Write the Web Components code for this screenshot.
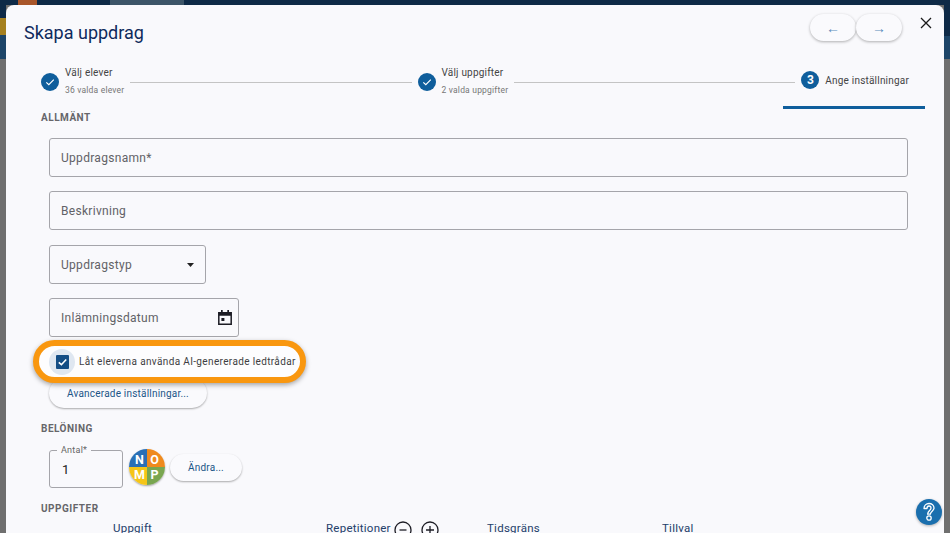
<!DOCTYPE html>
<html lang="sv">
<head>
<meta charset="utf-8">
<title>Skapa uppdrag</title>
<style>
    html, body { margin: 0; height: 533px; overflow: hidden; }
    body { font-family: Roboto, "Liberation Sans", sans-serif; }
</style>
</head>
<body>
<task-page>
    <task-dialog heading="Skapa uppdrag">
        <task-stepper>
            <task-step done label="Välj elever" sub="36 valda elever"></task-step>
            <task-step done label="Välj uppgifter" sub="2 valda uppgifter"></task-step>
            <task-step number="3" label="Ange inställningar" current></task-step>
        </task-stepper>
        <section-label style="margin-top:3px">ALLMÄNT</section-label>
        <div style="display:flex;flex-direction:column;gap:14.33px;padding:13px 0 0 43px;width:859px">
            <text-field label="Uppdragsnamn*"></text-field>
            <text-field label="Beskrivning"></text-field>
            <text-field label="Uppdragstyp" kind="select" style="width:157px"></text-field>
            <text-field label="Inlämningsdatum" kind="date" style="width:190px"></text-field>
        </div>
        <ai-option>Låt eleverna använda AI-genererade ledtrådar</ai-option>
        <pill-button style="margin:-5.5px 0 0 43px;width:158px;height:30px;padding-top:2px">Avancerade inställningar...</pill-button>
        <section-label style="margin-top:14px">BELÖNING</section-label>
        <div style="display:flex;align-items:center;padding:14px 0 0 43px">
            <amount-field label="Antal*" value="1"></amount-field>
            <nomp-logo style="margin-left:6px"></nomp-logo>
            <pill-button style="margin:-2px 0 0 5px;width:72px;height:27px">Ändra...</pill-button>
        </div>
        <section-label style="margin-top:14px">UPPGIFTER</section-label>
        <task-columns></task-columns>
    </task-dialog>
    <help-button></help-button>
</task-page>

<script>
class TaskPage extends HTMLElement {
    constructor() {
        super();
        this.attachShadow({ mode: "open" }).innerHTML = `
            <style>
                :host {
                    display: block;
                    position: relative;
                    width: 950px;
                    height: 533px;
                    overflow: hidden;
                    background-color: #6f6f6f;
                }

                .behind {
                    position: absolute;
                    inset: 0;
                }

                .behind div {
                    position: absolute;
                }

                .front {
                    position: relative;
                    padding: 5px 6px 0 6px;
                }
            </style>

            <div class="behind">
                <div style="left:0;top:0;width:950px;height:5px;background:#0e2a47"></div>
                <div style="left:18px;top:0;width:19px;height:5px;background:#a8562a"></div>
                <div style="left:110px;top:0;width:74px;height:5px;background:#3d5568"></div>
                <div style="left:0;top:5px;width:6px;height:13px;background:#0e2a47"></div>
                <div style="left:0;top:18px;width:6px;height:17px;background:#a5801f"></div>
                <div style="left:0;top:35px;width:6px;height:24px;background:#1d4568"></div>
                <div style="left:944px;top:5px;width:6px;height:31px;background:#0e2a47"></div>
                <div style="left:944px;top:36px;width:6px;height:23px;background:#1d4568"></div>
            </div>
            <div class="front"><slot></slot></div>
        `;
    }
}

class TaskDialog extends HTMLElement {
    constructor() {
        super();
        this.attachShadow({ mode: "open" }).innerHTML = `
            <style>
                :host {
                    display: block;
                    width: 938px;
                    height: 528px;
                    box-sizing: border-box;
                    overflow: hidden;
                    background-color: #f9f9fc;
                    border-radius: 8px 8px 0 0;
                }

                header {
                    display: flex;
                    align-items: flex-start;
                    height: 55px;
                    padding-left: 18px;
                }

                h1 {
                    flex: 1;
                    margin: 15px 0 0;
                    font-size: 18px;
                    font-weight: 400;
                    line-height: 26px;
                    color: #0f2a5c;
                }

                .nav {
                    display: flex;
                    margin-top: 9px;
                }

                .nav button {
                    width: 46px;
                    height: 27px;
                    padding: 0;
                    border: 0;
                    border-radius: 14px;
                    background: #fafafd;
                    box-shadow: 0 1px 3px rgba(0, 0, 0, 0.3);
                    color: #5c8cbc;
                    font: 14px Roboto, sans-serif;
                }

                .close {
                    width: 12px;
                    height: 12px;
                    margin: 12px 12px 0 18px;
                }
            </style>

            <header>
                <h1></h1>
                <div class="nav">
                    <button>←</button>
                    <button>→</button>
                </div>
                <svg class="close" viewBox="0 0 12 12">
                    <path d="M1 1l10 10M11 1L1 11" stroke="#1a1a1a" stroke-width="1.3" fill="none"/>
                </svg>
            </header>
            <slot></slot>
        `;
        this.shadowRoot.querySelector("h1").textContent = this.getAttribute("heading");
    }
}

class TaskStepper extends HTMLElement {
    constructor() {
        super();
        this.attachShadow({ mode: "open" }).innerHTML = `
            <style>
                :host {
                    display: flex;
                    height: 48px;
                    padding: 0 35px 0 35px;
                }
            </style>
            <slot></slot>
        `;
    }
}

class TaskStep extends HTMLElement {
    constructor() {
        super();
        const done = this.hasAttribute("done");
        const current = this.hasAttribute("current");
        const sub = this.getAttribute("sub");
        this.attachShadow({ mode: "open" }).innerHTML = `
            <style>
                :host {
                    display: flex;
                    align-items: center;
                    height: 48px;
                    flex: none;
                }

                :host([done]) {
                    flex: 1 1 auto;
                }

                .circle {
                    flex: none;
                    display: flex;
                    align-items: center;
                    justify-content: center;
                    width: 18px;
                    height: 18px;
                    border-radius: 50%;
                    background-color: #0f5e9c;
                    color: white;
                    font-size: 12px;
                    font-weight: 700;
                    margin-top: -4px;
                }

                :host([current]) .circle {
                    margin-top: -8px;
                }

                .text {
                    flex: none;
                    margin: -6px 0 0 6px;
                }

                :host([current]) .text {
                    margin-top: -8px;
                }

                .label {
                    font-size: 10px;
                    line-height: 13px;
                    color: #444;
                    letter-spacing: 0.2px;
                }

                .sub {
                    font-size: 8.5px;
                    line-height: 11px;
                    margin-top: 6px;
                    color: #777;
                    letter-spacing: 0.2px;
                }

                .line {
                    flex: 1;
                    height: 1px;
                    background-color: #c4c4c4;
                    margin: -4px 6px 0 6px;
                }

                .bar {
                    position: absolute;
                    left: 783px;
                    top: 105.5px;
                    width: 142px;
                    height: 3px;
                    background-color: #0f5e9c;
                }
            </style>

            <span class="circle">${done
                ? `<svg width="10" height="10" viewBox="0 0 10 10"><path d="M1.3 5.4l2.5 2.3 5-5" stroke="white" stroke-width="1.2" fill="none"/></svg>`
                : this.getAttribute("number")}</span>
            <div class="text">
                <div class="label">${this.getAttribute("label")}</div>
                ${sub ? `<div class="sub">${sub}</div>` : ""}
            </div>
            ${done ? `<div class="line"></div>` : ""}
            ${current ? `<div class="bar"></div>` : ""}
        `;
    }
}

class SectionLabel extends HTMLElement {
    constructor() {
        super();
        this.attachShadow({ mode: "open" }).innerHTML = `
            <style>
                :host {
                    display: block;
                    padding-left: 35px;
                    font-size: 10px;
                    line-height: 14px;
                    font-weight: 700;
                    letter-spacing: 0.5px;
                    color: #66666a;
                }
            </style>
            <slot></slot>
        `;
    }
}

class TextField extends HTMLElement {
    constructor() {
        super();
        const kind = this.getAttribute("kind");
        let tail = "";
        if (kind === "select") {
            tail = `<svg width="7" height="4" viewBox="0 0 7 4"><path d="M0 0h7L3.5 4z" fill="#222"/></svg>`;
        } else if (kind === "date") {
            tail = `<svg width="14" height="15" viewBox="0 0 14 15">
                <path d="M.8 2.8h12.4v11.4H.8z" fill="none" stroke="#1c1c24" stroke-width="1.5"/>
                <path d="M.8 2.8h12.4v3H.8zM3 0h1.7v3H3zM9.3 0H11v3H9.3zM3.4 8h3v3h-3z" fill="#1c1c24"/>
            </svg>`;
        }
        this.attachShadow({ mode: "open" }).innerHTML = `
            <style>
                :host {
                    display: block;
                    height: 39px;
                }

                .box {
                    display: flex;
                    align-items: center;
                    justify-content: space-between;
                    box-sizing: border-box;
                    height: 100%;
                    padding: 1px ${kind === "select" ? 11 : 6}px 0 11px;
                    border: 1px solid #a5a5aa;
                    border-radius: 3px;
                    font-size: 12px;
                    letter-spacing: 0.3px;
                    color: #626267;
                }
            </style>
            <div class="box"><span>${this.getAttribute("label")}</span>${tail}</div>
        `;
    }
}

class AiOption extends HTMLElement {
    constructor() {
        super();
        this.attachShadow({ mode: "open" }).innerHTML = `
            <style>
                :host {
                    position: relative;
                    z-index: 1;
                    display: flex;
                    align-items: center;
                    box-sizing: border-box;
                    width: 273px;
                    height: 43px;
                    margin: 3.5px 0 0 27px;
                    padding-left: 10px;
                    background-color: #fdfdfe;
                    border: 6px solid #f9970f;
                    border-radius: 22px;
                    box-shadow: 0 2px 5px rgba(0, 0, 0, 0.35);
                    font-size: 10px;
                    letter-spacing: 0.36px;
                    color: #3d3d42;
                    white-space: nowrap;
                }

                .halo {
                    flex: none;
                    display: flex;
                    align-items: center;
                    justify-content: center;
                    width: 26px;
                    height: 26px;
                    margin-right: 4px;
                    border-radius: 50%;
                    background-color: #dfe7f1;
                }
            </style>

            <span class="halo">
                <svg width="13" height="14" viewBox="0 0 13 14">
                    <rect width="13" height="14" rx="1" fill="#134d85"/>
                    <path d="M2.8 7.3l2.6 2.4 4.8-5.2" stroke="white" stroke-width="1.6" fill="none"/>
                </svg>
            </span>
            <slot></slot>
        `;
    }
}

class PillButton extends HTMLElement {
    constructor() {
        super();
        this.attachShadow({ mode: "open" }).innerHTML = `
            <style>
                :host {
                    display: flex;
                    align-items: center;
                    justify-content: center;
                    box-sizing: border-box;
                    flex: none;
                    border-radius: 15px;
                    background-color: #fafafd;
                    box-shadow: 0 1px 2px rgba(0, 0, 0, 0.32);
                    font-size: 10px;
                    letter-spacing: 0.2px;
                    color: #1b5587;
                    white-space: nowrap;
                }
            </style>
            <slot></slot>
        `;
    }
}

class AmountField extends HTMLElement {
    constructor() {
        super();
        this.attachShadow({ mode: "open" }).innerHTML = `
            <style>
                :host {
                    display: block;
                    position: relative;
                    flex: none;
                    box-sizing: border-box;
                    width: 74px;
                    height: 38px;
                    padding: 10px 0 0 12px;
                    border: 1px solid #a5a5aa;
                    border-radius: 3px;
                    font-size: 13px;
                    line-height: 17px;
                    color: #222;
                }

                .legend {
                    position: absolute;
                    left: 7px;
                    top: -6px;
                    padding: 0 4px;
                    background-color: #f9f9fc;
                    font-size: 9px;
                    line-height: 11px;
                    letter-spacing: 0.25px;
                    color: #666;
                }
            </style>
            <span class="legend">${this.getAttribute("label")}</span>
            ${this.getAttribute("value")}
        `;
    }
}

class NompLogo extends HTMLElement {
    constructor() {
        super();
        this.attachShadow({ mode: "open" }).innerHTML = `
            <style>
                :host {
                    display: grid;
                    grid-template-columns: 1fr 1fr;
                    flex: none;
                    width: 36px;
                    height: 36px;
                    margin-top: -3px;
                    border-radius: 50%;
                    overflow: hidden;
                    box-shadow: 0 1px 2px rgba(0, 0, 0, 0.35);
                    font-size: 12.5px;
                    font-weight: 700;
                    color: white;
                }

                span {
                    display: flex;
                    align-items: center;
                    justify-content: center;
                }
            </style>
            <span style="background:#2a6fb5;padding:3px 0 0 3px">N</span>
            <span style="background:#ef8a1d;padding:3px 3px 0 0">O</span>
            <span style="background:#f5c518;padding:0 0 3px 3px">M</span>
            <span style="background:#79a650;padding:0 3px 3px 0">P</span>
        `;
    }
}

class TaskColumns extends HTMLElement {
    constructor() {
        super();
        const round = (inner) => `<svg width="18" height="18" viewBox="0 0 18 18">
            <circle cx="9" cy="9" r="8" fill="none" stroke="#1c1c24" stroke-width="1.3"/>
            <path d="${inner}" stroke="#1c1c24" stroke-width="1.3" fill="none"/>
        </svg>`;
        this.attachShadow({ mode: "open" }).innerHTML = `
            <style>
                :host {
                    display: grid;
                    grid-template-columns: 213px 161px 175px auto;
                    align-items: start;
                    height: 18px;
                    margin-top: 5px;
                    padding-left: 107px;
                    font-size: 11.5px;
                    line-height: 14px;
                    letter-spacing: 0.25px;
                    color: #24406a;
                }

                .reps {
                    display: flex;
                    gap: 9px;
                }

                .reps span {
                    margin-right: -6px;
                }
            </style>
            <div>Uppgift</div>
            <div class="reps"><span>Repetitioner</span>${round("M5.5 9h7")}${round("M5 9h8M9 5v8")}</div>
            <div>Tidsgräns</div>
            <div>Tillval</div>
        `;
    }
}

class HelpButton extends HTMLElement {
    constructor() {
        super();
        this.attachShadow({ mode: "open" }).innerHTML = `
            <style>
                :host {
                    position: absolute;
                    left: 916px;
                    top: 499px;
                    display: flex;
                    align-items: center;
                    justify-content: center;
                    width: 26px;
                    height: 26px;
                    border-radius: 50%;
                    background-color: #1a6fae;
                    box-shadow: 0 1px 3px rgba(0, 0, 0, 0.3);
                }
            </style>
            <svg width="14" height="20" viewBox="0 0 14 20">
                <path d="M2 6.5C2 3.5 4.2 1.5 7 1.5s5 2 5 4.5c0 3-3.6 3.4-3.6 6.2H5.6C5.6 8.6 9 8.4 9 6 9 4.8 8.1 4 7 4S5 4.9 5 6.5z" fill="none" stroke="white" stroke-width="1.3" stroke-linejoin="round"/>
                <circle cx="7" cy="16" r="2.2" fill="none" stroke="white" stroke-width="1.3"/>
            </svg>
        `;
    }
}

customElements.define("task-page", TaskPage);
customElements.define("task-dialog", TaskDialog);
customElements.define("task-stepper", TaskStepper);
customElements.define("task-step", TaskStep);
customElements.define("section-label", SectionLabel);
customElements.define("text-field", TextField);
customElements.define("ai-option", AiOption);
customElements.define("pill-button", PillButton);
customElements.define("amount-field", AmountField);
customElements.define("nomp-logo", NompLogo);
customElements.define("task-columns", TaskColumns);
customElements.define("help-button", HelpButton);
</script>
</body>
</html>
